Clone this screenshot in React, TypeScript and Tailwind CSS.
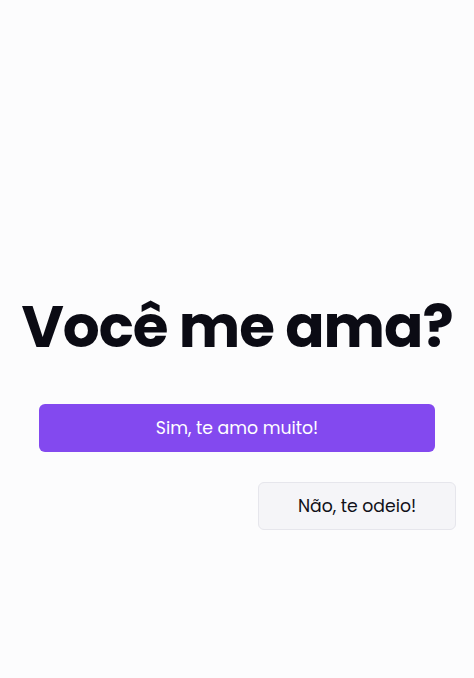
export default function App() {
	return (
		<div className="flex min-h-[678px] w-full flex-col items-center bg-[#fcfcfd] font-['Poppins','Inter',sans-serif]">
			<div className="h-[292px]" />
			<h1 className="text-[58px] font-bold leading-[70px] tracking-[-1px] text-[#0b0b14]">
				Você me ama?
			</h1>
			<div className="mt-[42px] flex w-full flex-col px-[39px]">
				<button className="h-[48px] w-full rounded-md bg-[#8349ef] pt-[2px] text-[17.25px] text-white">
					Sim, te amo muito!
				</button>
			</div>
			<div className="mt-[30px] flex w-full justify-end pr-[18px]">
				<button className="h-[48px] w-[198px] rounded-md border border-[#e6e6ec] bg-[#f5f5f8] pt-[2px] text-[17.25px] text-[#111118]">
					Não, te odeio!
				</button>
			</div>
		</div>
	);
}
